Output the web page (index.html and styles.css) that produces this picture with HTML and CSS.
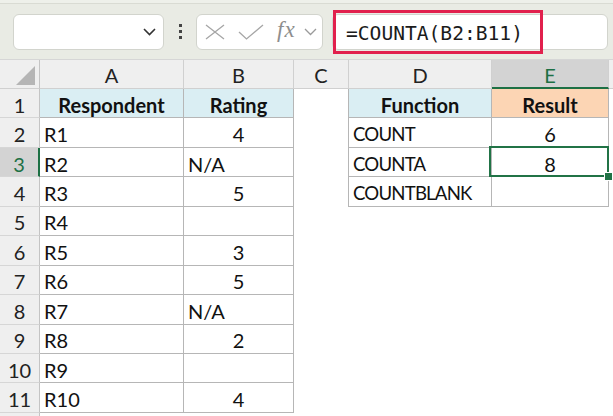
FILE: index.html
```html
<!DOCTYPE html>
<html lang="en">

<head>
    <meta charset="UTF-8">
    <title>COUNTA</title>
    <link rel="stylesheet" href="styles.css">
</head>

<body>

    <div class="toolbar">
        <div class="namebox">
            <svg class="chev" width="13" height="8" viewBox="0 0 13 8"><path d="M1 1 L6.5 6.5 L12 1" /></svg>
        </div>
        <div class="dots"><span></span><span></span><span></span></div>
        <div class="fnbox">
            <svg class="ico" width="20" height="16" viewBox="0 0 20 16"><path d="M1 1 L19 15 M19 1 L1 15" /></svg>
            <svg class="ico" width="26" height="16" viewBox="0 0 26 16"><path d="M1 8 L8.5 15 L25 1" /></svg>
            <span class="fx">fx</span>
            <svg class="chev small" width="13" height="8" viewBox="0 0 13 8"><path d="M1 1 L6.5 6.5 L12 1" /></svg>
        </div>
        <div class="formula">
            <span class="ftext">=COUNTA(B2:B11)</span>
            <div class="mark"></div>
        </div>
    </div>

    <div class="sheet">
        <div class="corner"><span class="tri"></span></div>
        <div class="ch">A</div>
        <div class="ch">B</div>
        <div class="ch nob">C</div>
        <div class="ch lb">D</div>
        <div class="ch act">E</div>
        <div class="ch f"></div>

        <div class="rh">1</div>
        <div class="cell t hd bold">Respondent</div>
        <div class="cell t hd bold">Rating</div>
        <div class="cell"></div>
        <div class="cell t lb hd bold">Function</div>
        <div class="cell t hp bold">Result</div>
        <div class="cell"></div>

        <div class="rh">2</div>
        <div class="cell t">R1</div>
        <div class="cell t num">4</div>
        <div class="cell"></div>
        <div class="cell t lb caps">COUNT</div>
        <div class="cell t num">6</div>
        <div class="cell"></div>

        <div class="rh sel">3</div>
        <div class="cell t">R2</div>
        <div class="cell t">N/A</div>
        <div class="cell"></div>
        <div class="cell t lb caps">COUNTA</div>
        <div class="cell t num active">8</div>
        <div class="cell"></div>

        <div class="rh">4</div>
        <div class="cell t">R3</div>
        <div class="cell t num">5</div>
        <div class="cell"></div>
        <div class="cell t lb caps">COUNTBLANK</div>
        <div class="cell t num"></div>
        <div class="cell"></div>

        <div class="rh">5</div>
        <div class="cell t">R4</div>
        <div class="cell t num"></div>
        <div class="cell"></div>
        <div class="cell"></div>
        <div class="cell"></div>
        <div class="cell"></div>

        <div class="rh">6</div>
        <div class="cell t">R5</div>
        <div class="cell t num">3</div>
        <div class="cell"></div>
        <div class="cell"></div>
        <div class="cell"></div>
        <div class="cell"></div>

        <div class="rh">7</div>
        <div class="cell t">R6</div>
        <div class="cell t num">5</div>
        <div class="cell"></div>
        <div class="cell"></div>
        <div class="cell"></div>
        <div class="cell"></div>

        <div class="rh">8</div>
        <div class="cell t">R7</div>
        <div class="cell t">N/A</div>
        <div class="cell"></div>
        <div class="cell"></div>
        <div class="cell"></div>
        <div class="cell"></div>

        <div class="rh">9</div>
        <div class="cell t">R8</div>
        <div class="cell t num">2</div>
        <div class="cell"></div>
        <div class="cell"></div>
        <div class="cell"></div>
        <div class="cell"></div>

        <div class="rh">10</div>
        <div class="cell t">R9</div>
        <div class="cell t num"></div>
        <div class="cell"></div>
        <div class="cell"></div>
        <div class="cell"></div>
        <div class="cell"></div>

        <div class="rh">11</div>
        <div class="cell t">R10</div>
        <div class="cell t num">4</div>
        <div class="cell"></div>
        <div class="cell"></div>
        <div class="cell"></div>
        <div class="cell"></div>

        <div class="rh"></div>
    </div>

</body>

</html>
```

FILE: styles.css
```css
* {
    box-sizing: border-box;
}

body {
    margin: 0;
    width: 613px;
    height: 416px;
    overflow: hidden;
    background: #ffffff;
    font-family: Lato, "Open Sans", sans-serif;
    color: #111;
}

/* formula bar strip */
.toolbar {
    height: 60px;
    display: flex;
    align-items: center;
    padding-top: 4px;
    background: linear-gradient(#eef0ea 0, #eef0ea 3px, #d9dbd3 3px, #d9dbd3 4px, #e9ebe4 4px);
    border-bottom: 1px solid #d6d6d6;
}

.namebox {
    width: 151px;
    height: 36px;
    margin-left: 13px;
    background: #fff;
    border: 1px solid #d2d4cd;
    border-radius: 6px;
    display: flex;
    align-items: center;
    justify-content: flex-end;
    padding-right: 7px;
}

.chev path {
    fill: none;
    stroke: #333;
    stroke-width: 1.6;
}

.chev.small path {
    stroke: #9a9a9a;
    stroke-width: 1.3;
}

.dots {
    width: 32px;
    display: flex;
    flex-direction: column;
    align-items: center;
    gap: 3px;
}

.dots span {
    width: 3px;
    height: 3px;
    background: #444;
}

.fnbox {
    width: 127px;
    height: 36px;
    background: #fff;
    border: 1px solid #d2d4cd;
    border-radius: 6px;
    display: flex;
    align-items: center;
    padding-left: 8px;
}

.ico path {
    fill: none;
    stroke: #a6a6a6;
    stroke-width: 1.3;
}

.fnbox .ico + .ico {
    margin-left: 13px;
}

.fx {
    font-family: "Liberation Serif", serif;
    font-style: italic;
    font-size: 23px;
    color: #8e8e8e;
    margin-left: 13px;
    margin-top: -4px;
    letter-spacing: 1px;
}

.fnbox .small {
    margin-left: 8px;
}

.formula {
    position: relative;
    flex: 1;
    height: 36px;
    margin-left: 9px;
    margin-right: 5px;
    background: #fff;
    border: 1px solid #d2d4cd;
    border-radius: 6px;
    padding: 7px 0 0 13px;
}

.ftext {
    font-family: "DejaVu Sans Mono", monospace;
    font-size: 19.6px;
    color: #1b1b1b;
}

/* red highlight drawn over the formula */
.mark {
    position: absolute;
    left: 0;
    top: -5px;
    width: 210px;
    height: 44px;
    border: 3px solid #e1204d;
}

/* worksheet grid */
.sheet {
    height: 356px;
    overflow: hidden;
    display: grid;
    grid-template-columns: 40px 144px 110px 54px 144px 117px 1fr;
    grid-template-rows: 29px;
    grid-auto-rows: 29.45px;
    font-size: 20px;
}

.corner,
.ch {
    background: #efefef;
    border-bottom: 1px solid #d0d0d0;
}

.corner {
    border-right: 1px solid #c4c4c4;
    position: relative;
}

.tri {
    position: absolute;
    right: 4px;
    bottom: 3px;
    width: 0;
    height: 0;
    border-left: 19px solid transparent;
    border-bottom: 19px solid #b5b5b5;
}

.ch {
    display: flex;
    align-items: center;
    justify-content: center;
    border-right: 1px solid #d0d0d0;
    color: #222;
    padding-top: 2px;
}

.ch.nob {
    border-right: none;
}

.ch.lb {
    border-left: 1px solid #d0d0d0;
}

.ch.f {
    border-right: none;
}

.ch.act {
    background: #d3d3d3;
    color: #1d7044;
    border-bottom: 2px solid #1d7044;
}

.rh {
    background: #efefef;
    border-right: 1px solid #c4c4c4;
    border-bottom: 1px solid #d6d6d6;
    display: flex;
    align-items: center;
    justify-content: center;
    padding-top: 3px;
    color: #222;
}

.rh.sel {
    background: #d3d3d3;
    color: #1d7044;
    border-right: 2px solid #1d7044;
}

.cell {
    display: flex;
    align-items: center;
    padding: 3px 0 0 4px;
    white-space: nowrap;
}

.caps {
    font-size: 18.6px;
    letter-spacing: -0.8px;
}

.t {
    border-right: 1px solid #b6b6b6;
    border-bottom: 1px solid #b6b6b6;
}

.lb {
    border-left: 1px solid #b6b6b6;
}

.num,
.bold {
    justify-content: center;
    padding-left: 0;
}

.bold {
    font-weight: bold;
}

.hd {
    background: #daeef3;
}

.hp {
    background: #fcd5b4;
}

.active {
    position: relative;
}

.active::after {
    content: "";
    position: absolute;
    left: -3px;
    top: -2px;
    right: -1px;
    bottom: -1px;
    border: 2px solid #217346;
}

.active::before {
    content: "";
    position: absolute;
    right: -5px;
    bottom: -5px;
    width: 7px;
    height: 7px;
    background: #217346;
    border: 1px solid #fff;
    z-index: 1;
}
```
